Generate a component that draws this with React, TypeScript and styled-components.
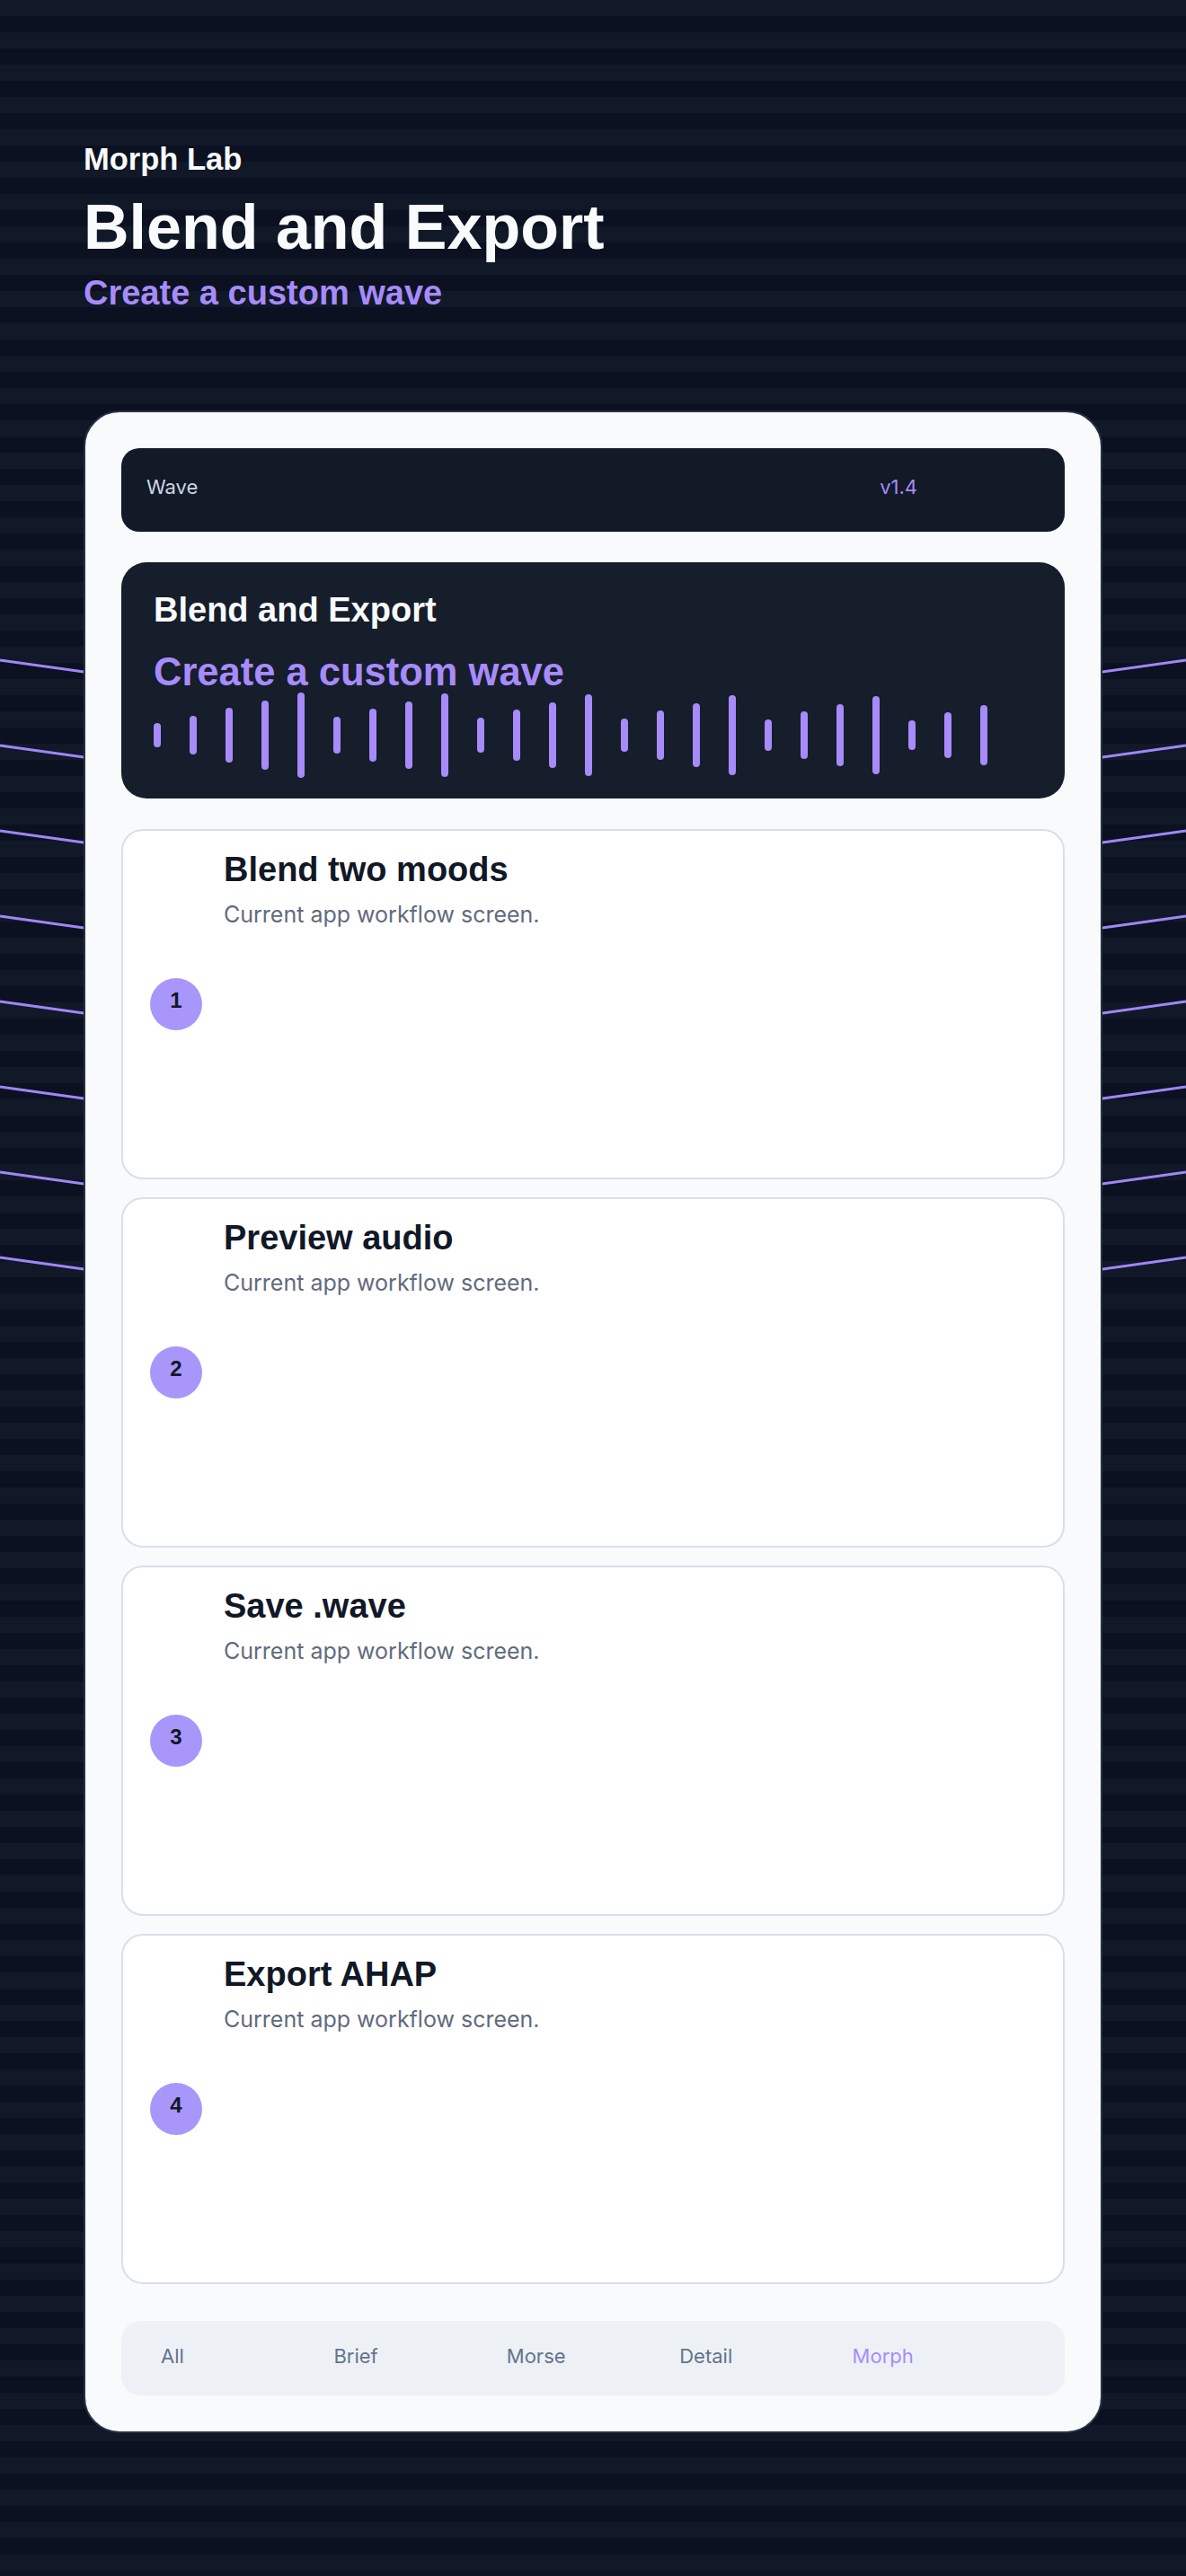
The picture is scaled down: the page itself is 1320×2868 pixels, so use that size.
import React from 'react';
import styled, { createGlobalStyle } from 'styled-components';

const GlobalStyle = createGlobalStyle`
	html, body {
		margin: 0;
		padding: 0;
		background: #0b1120;
	}
	* {
		box-sizing: border-box;
	}
`;

const Page = styled.div`
	position: relative;
	width: 1320px;
	min-height: 2868px;
	overflow: hidden;
	padding: 157px 93px 0;
	background: repeating-linear-gradient(to bottom, #111827 0 18px, #0b1120 18px 36px);
	font-family: "Liberation Sans", Arial, sans-serif;
`;

const Backdrop = styled.svg`
	position: absolute;
	top: 0;
	left: 0;
	width: 1320px;
	height: 2868px;
	pointer-events: none;
`;

const Header = styled.header`
	position: relative;
	display: flex;
	flex-direction: column;
`;

const Eyebrow = styled.div`
	font-size: 34.5px;
	font-weight: 700;
	line-height: 1.2;
	color: #f8fafc;
`;

const Title = styled.h1`
	margin: 13px 0 0;
	font-size: 70px;
	font-weight: 700;
	line-height: 1.2;
	color: #f8fafc;
`;

const Tagline = styled.p`
	margin: 9px 0 0;
	font-size: 38px;
	font-weight: 700;
	line-height: 1.2;
	color: #a78bfa;
`;

const Shell = styled.main`
	position: relative;
	margin-top: 107px;
	width: 1134px;
	padding: 40px;
	display: flex;
	flex-direction: column;
	gap: 34px;
	border: 2px solid #263143;
	border-radius: 40px;
	background: #f8fafc;
`;

const TopBar = styled.div`
	display: flex;
	align-items: center;
	justify-content: space-between;
	height: 93px;
	padding: 0 164px 7px 28px;
	border-radius: 20px;
	background: #121927;
	font-family: Inter, "Liberation Sans", sans-serif;
	font-size: 22px;
`;

const BarLabel = styled.span<{ $accent?: boolean }>`
	color: ${(p) => (p.$accent ? '#a78bfa' : '#cbd5e1')};
`;

const Hero = styled.section`
	display: flex;
	flex-direction: column;
	height: 263px;
	padding: 31px 36px 0;
	border-radius: 28px;
	background: #161d2b;
`;

const HeroTitle = styled.h2`
	margin: 0;
	font-size: 38px;
	font-weight: 700;
	line-height: 1.2;
	color: #f8fafc;
`;

const HeroTagline = styled.p`
	margin: 24px 0 0;
	font-size: 43.5px;
	font-weight: 700;
	line-height: 1;
	color: #a78bfa;
`;

const Wave = styled.div`
	display: flex;
	align-items: center;
	gap: 32px;
	height: 96px;
`;

const WaveBar = styled.span<{ $h: number }>`
	width: 8px;
	height: ${(p) => p.$h}px;
	border-radius: 4px;
	background: #a78bfa;
`;

const StepList = styled.div`
	display: flex;
	flex-direction: column;
	gap: 20px;
`;

const StepCard = styled.article`
	display: grid;
	grid-template-columns: 58px 1fr;
	column-gap: 24px;
	height: 390px;
	padding: 21px 30px;
	border: 2px solid #d8dfe9;
	border-radius: 24px;
	background: #ffffff;
`;

const StepBadge = styled.div`
	align-self: center;
	display: flex;
	align-items: center;
	justify-content: center;
	width: 58px;
	height: 58px;
	padding-bottom: 8px;
	border-radius: 50%;
	background: #a996fb;
	font-size: 24px;
	font-weight: 700;
	color: #111827;
`;

const StepBody = styled.div`
	align-self: start;
`;

const StepTitle = styled.h3`
	margin: 0;
	font-size: 38px;
	font-weight: 700;
	line-height: 1.2;
	color: #111827;
`;

const StepText = styled.p`
	margin: 11px 0 0;
	font-family: Inter, "Liberation Sans", sans-serif;
	font-size: 25px;
	line-height: 1.21;
	color: #5f6b7e;
`;

const Nav = styled.nav`
	display: grid;
	grid-template-columns: repeat(5, 1fr);
	align-items: center;
	height: 83px;
	margin-top: 7px;
	padding: 0 44px 5px;
	border-radius: 22px;
	background: #edf1f6;
	font-family: Inter, "Liberation Sans", sans-serif;
	font-size: 22px;
`;

const NavItem = styled.span<{ $active?: boolean }>`
	color: ${(p) => (p.$active ? '#a78bfa' : '#64748b')};
`;

const bars = [27, 43, 61, 77, 95, 41, 59, 75, 93, 39, 57, 73, 91, 37, 55, 71, 89, 35, 53, 69, 87, 33, 51, 67];

const steps = ['Blend two moods', 'Preview audio', 'Save .wave', 'Export AHAP'];

const tabs = ['All', 'Brief', 'Morse', 'Detail', 'Morph'];

// y of each backdrop line at the page edges
const lines = [0, 1, 2, 3, 4, 5, 6, 7].map((k) => 735 + k * 95);

const App = () => {
	return <>
		<GlobalStyle />
		<Page>
			<Backdrop viewBox="0 0 1320 2868" aria-hidden="true">
				{lines.map((y) => (
					<polyline
						key={y}
						points={`0,${y} 660,${y + 92} 1320,${y}`}
						fill="none"
						stroke="#9f87f5"
						strokeWidth={3}
					/>
				))}
			</Backdrop>
			<Header>
				<Eyebrow>Morph Lab</Eyebrow>
				<Title>Blend and Export</Title>
				<Tagline>Create a custom wave</Tagline>
			</Header>
			<Shell>
				<TopBar>
					<BarLabel>Wave</BarLabel>
					<BarLabel $accent>v1.4</BarLabel>
				</TopBar>
				<Hero>
					<HeroTitle>Blend and Export</HeroTitle>
					<HeroTagline>Create a custom wave</HeroTagline>
					<Wave>
						{bars.map((h, i) => <WaveBar key={i} $h={h} />)}
					</Wave>
				</Hero>
				<StepList>
					{steps.map((step, index) => (
						<StepCard key={step}>
							<StepBadge>{index + 1}</StepBadge>
							<StepBody>
								<StepTitle>{step}</StepTitle>
								<StepText>Current app workflow screen.</StepText>
							</StepBody>
						</StepCard>
					))}
				</StepList>
				<Nav>
					{tabs.map((tab) => <NavItem key={tab} $active={tab === 'Morph'}>{tab}</NavItem>)}
				</Nav>
			</Shell>
		</Page>
	</>;
};

export default App;
